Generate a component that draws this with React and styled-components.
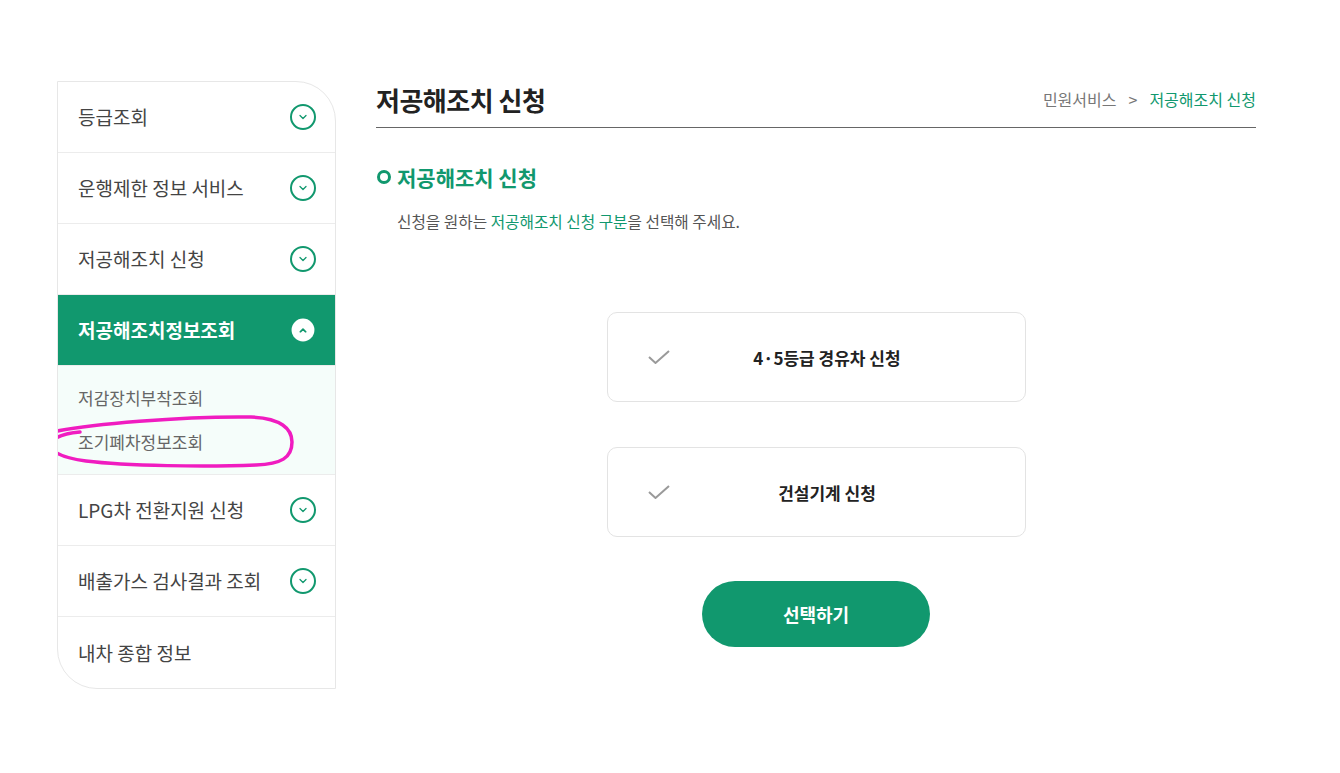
import React from "react";
import styled, { createGlobalStyle } from "styled-components";

const GREEN = "#11986e";

const GlobalStyle = createGlobalStyle`
  body {
    margin: 0;
    background: #fff;
    font-family: "Noto Sans CJK KR", "Noto Sans", sans-serif;
    color: #333;
  }
  * { box-sizing: border-box; }
`;

const Page = styled.div`
  display: flex;
  align-items: flex-start;
  gap: 40px;
  padding: 81px 0 0 57px;
  width: 1340px;
`;

const Sidebar = styled.nav`
  width: 279px;
  border: 1px solid #e7e7e7;
  border-radius: 0 40px 0 40px;
  overflow: hidden;
  background: #fff;
`;

const MenuRow = styled.div`
  height: 71px;
  display: flex;
  align-items: center;
  justify-content: space-between;
  padding: 0 19px 1px 20px;
  border-bottom: ${({ last }) => (last ? "none" : "1px solid #ececec")};
  background: ${({ active }) => (active ? GREEN : "transparent")};
  color: ${({ active }) => (active ? "#fff" : "#444")};
  font-size: 19px;
  font-weight: ${({ active }) => (active ? 700 : 400)};
`;

const CircleIcon = styled.span`
  width: 26px;
  height: 26px;
  border-radius: 50%;
  display: flex;
  align-items: center;
  justify-content: center;
  border: ${({ filled }) => (filled ? "none" : `2px solid ${GREEN}`)};
  background: ${({ filled }) => (filled ? "#fff" : "transparent")};
  transform: ${({ filled }) => (filled ? "scale(0.88)" : "none")};
`;

const SubMenu = styled.div`
  position: relative;
  background: #f5fdfa;
  padding: 9px 20px 11px;
  border-bottom: 1px solid #ececec;
`;

const SubItem = styled.div`
  height: 44px;
  display: flex;
  align-items: center;
  font-size: 17px;
  color: #666;
`;

const Annotation = styled.svg`
  position: absolute;
  left: -12px;
  top: 48px;
  overflow: visible;
  pointer-events: none;
`;

const Main = styled.main`
  width: 880px;
`;

const Header = styled.div`
  height: 47px;
  display: flex;
  align-items: center;
  justify-content: space-between;
  border-bottom: 1px solid #666;
  padding-bottom: 10px;
`;

const Title = styled.h1`
  margin: 0;
  font-size: 26px;
  font-weight: 700;
  color: #222;
  letter-spacing: -0.5px;
`;

const Breadcrumb = styled.div`
  font-size: 16px;
  color: #777;
  display: flex;
  gap: 12px;
  span.current { color: ${GREEN}; }
`;

const SectionTitle = styled.h2`
  margin: 34px 0 0;
  display: flex;
  align-items: center;
  gap: 6px;
  font-size: 21px;
  line-height: 30px;
  font-weight: 700;
  color: ${GREEN};
`;

const Ring = styled.span`
  width: 14px;
  height: 14px;
  border-radius: 50%;
  border: 3.5px solid ${GREEN};
  margin-left: 1px;
`;

const Desc = styled.p`
  margin: 19px 0 0;
  padding-left: 21px;
  font-size: 15.7px;
  line-height: 22px;
  color: #555;
  em { font-style: normal; color: ${GREEN}; }
`;

const Options = styled.div`
  margin-top: 79px;
  display: flex;
  flex-direction: column;
  align-items: center;
  gap: 45px;
`;

const Card = styled.div`
  width: 419px;
  height: 90px;
  border: 1px solid #e3e3e3;
  border-radius: 10px;
  display: flex;
  align-items: center;
  padding: 0 40px 0 40px;
  background: #fff;
`;

const CardLabel = styled.span`
  flex: 1;
  text-align: center;
  font-size: 17px;
  font-weight: 700;
  color: #222;
`;

const SelectButton = styled.button`
  margin-top: -1px;
  width: 228px;
  height: 66px;
  border: none;
  border-radius: 33px;
  background: ${GREEN};
  color: #fff;
  font-family: inherit;
  font-size: 18px;
  font-weight: 700;
`;

const Chevron = ({ up, color }) => (
  <svg width="10" height="6" viewBox="0 0 10 6">
    <polyline
      points={up ? "2,5 5,2 8,5" : "2,1.5 5,4.5 8,1.5"}
      fill="none"
      stroke={color}
      strokeWidth={up ? 2 : 1.3}
      strokeLinecap="round"
      strokeLinejoin="round"
    />
  </svg>
);

const Check = () => (
  <svg width="22" height="14" viewBox="0 0 22 14">
    <polyline points="1,7 7.5,13 21,1" fill="none" stroke="#9a9a9a" strokeWidth="2" />
  </svg>
);

const menu = [
  { label: "등급조회", icon: true },
  { label: "운행제한 정보 서비스", icon: true },
  { label: "저공해조치 신청", icon: true },
  { label: "저공해조치정보조회", icon: true, active: true, sub: ["저감장치부착조회", "조기폐차정보조회"] },
  { label: "LPG차 전환지원 신청", icon: true },
  { label: "배출가스 검사결과 조회", icon: true },
  { label: "내차 종합 정보", icon: false, last: true },
];

export default function App() {
  return (
    <>
      <GlobalStyle />
      <Page>
        <Sidebar>
          {menu.map((m) => (
            <React.Fragment key={m.label}>
              <MenuRow active={m.active} last={m.last}>
                <span>{m.label}</span>
                {m.icon && (
                  <CircleIcon filled={m.active}>
                    <Chevron up={m.active} color={GREEN} />
                  </CircleIcon>
                )}
              </MenuRow>
              {m.sub && (
                <SubMenu>
                  {m.sub.map((s) => (
                    <SubItem key={s}>{s}</SubItem>
                  ))}
                  <Annotation width="250" height="56" viewBox="0 0 250 56">
                    <path
                      d="M2 19 C 40 10, 140 2, 205 3 C 235 4, 246 15, 246 28 C 246 44, 235 50, 210 51 C 160 53, 80 52, 40 47 C 10 43, 2 35, 6 28 C 10 22, 22 19, 34 18"
                      fill="none"
                      stroke="#f01cc0"
                      strokeWidth="3.5"
                      strokeLinecap="round"
                    />
                  </Annotation>
                </SubMenu>
              )}
            </React.Fragment>
          ))}
        </Sidebar>

        <Main>
          <Header>
            <Title>저공해조치 신청</Title>
            <Breadcrumb>
              <span>민원서비스</span>
              <span>&gt;</span>
              <span className="current">저공해조치 신청</span>
            </Breadcrumb>
          </Header>

          <SectionTitle>
            <Ring />
            저공해조치 신청
          </SectionTitle>
          <Desc>
            신청을 원하는 <em>저공해조치 신청 구분</em>을 선택해 주세요.
          </Desc>

          <Options>
            <Card>
              <Check />
              <CardLabel>4·5등급 경유차 신청</CardLabel>
            </Card>
            <Card>
              <Check />
              <CardLabel>건설기계 신청</CardLabel>
            </Card>
            <SelectButton>선택하기</SelectButton>
          </Options>
        </Main>
      </Page>
    </>
  );
}
